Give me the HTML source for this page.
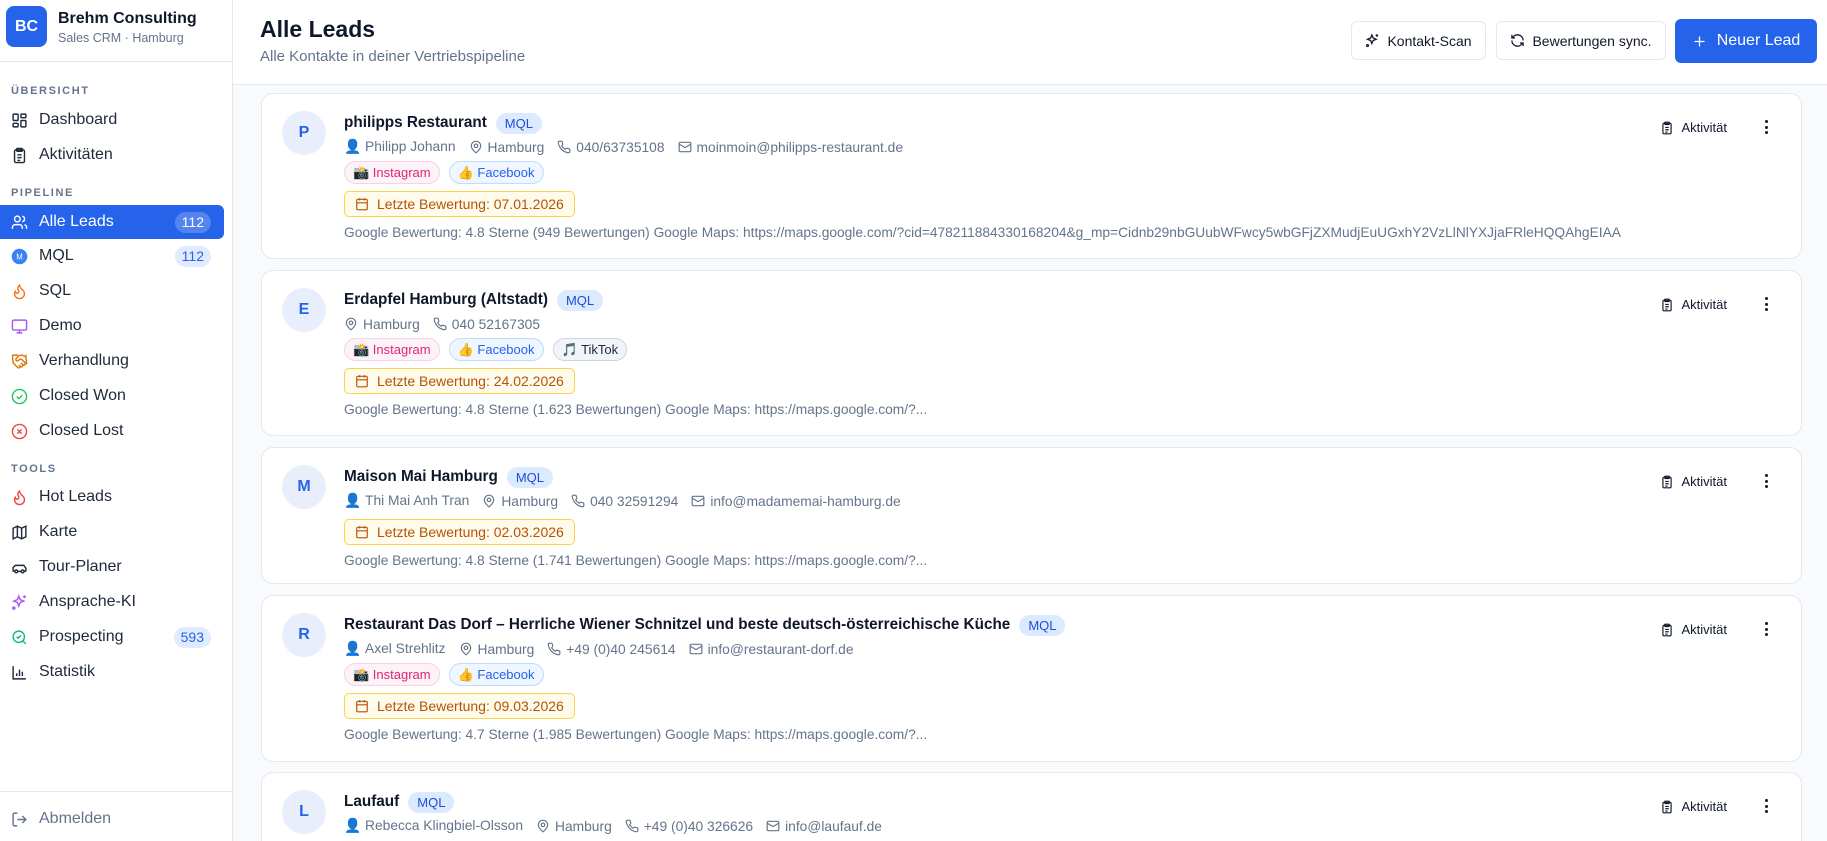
<!DOCTYPE html>
<html><head><meta charset="utf-8">
<style>
*{box-sizing:border-box;margin:0;padding:0}
html,body{width:1827px;height:841px;overflow:hidden}
body{font-family:"Liberation Sans","Noto Sans CJK JP",sans-serif;background:#f8fafc;color:#0f172a;position:relative}
.sb{position:absolute;left:0;top:0;width:233px;height:841px;background:#fff;border-right:1px solid #e2e8f0}
.logo{position:absolute;left:6px;top:6px;width:41px;height:41px;border-radius:8px;background:#2563eb;color:#fff;font-weight:700;font-size:16px;display:flex;align-items:center;justify-content:center}
.bn{position:absolute;left:58px;top:10px;font-weight:700;font-size:16px}
.bs{position:absolute;left:58px;top:31px;font-size:12.5px;color:#64748b}
.div{position:absolute;left:0;width:232px;height:1px;background:#e2e8f0}
.sec{position:absolute;left:11px;font-size:11px;letter-spacing:1.6px;color:#64748b;font-weight:700}
.it{position:absolute;left:0;width:224px;height:34px;display:flex;align-items:center;padding-left:11px;font-size:16px;color:#1e293b}
.it svg{width:17px;height:17px;margin-right:11px;flex:none}
.it.act{background:#2563eb;color:#fff;border-radius:0 6px 6px 0}
.bdg{position:absolute;right:13px;top:7px;height:21px;padding:0 7px;border-radius:11px;background:#e0ebff;color:#2563eb;font-size:14px;line-height:21px}
.act .bdg{background:rgba(255,255,255,.22);color:#fff}
.hd{position:absolute;left:233px;top:0;right:0;height:85px;background:#fff;border-bottom:1px solid #e2e8f0}
.h1{position:absolute;left:27px;top:16px;font-size:23px;font-weight:700}
.h2{position:absolute;left:27px;top:48px;font-size:15px;color:#64748b}
.btn{position:absolute;top:21px;height:39px;border:1px solid #e2e8f0;border-radius:6px;background:#fff;display:flex;align-items:center;justify-content:center;font-size:14px;color:#0f172a;gap:7px}
.btn svg{width:15px;height:15px}
.card{position:absolute;left:261px;width:1541px;background:#fff;border:1px solid #e2e8f0;border-radius:12px;padding:17px 0 0 82px}
.av{position:absolute;left:20px;top:17px;width:44px;height:44px;border-radius:50%;background:#e8eefc;color:#2563eb;font-weight:700;font-size:16px;display:flex;align-items:center;justify-content:center}
.tt{height:24px;display:flex;align-items:center;font-size:15.3px;font-weight:700;color:#0f172a;white-space:nowrap}
.mql{margin-left:9px;height:21px;padding:0 9px;border-radius:11px;background:#dbeafe;color:#1d4ed8;font-size:13px;font-weight:400;line-height:21px}
.mt{height:24px;display:flex;align-items:center;font-size:13.8px;color:#64748b;white-space:nowrap}
.mt span{display:flex;align-items:center;margin-right:13px}
.mt svg{width:14px;height:14px;margin-right:5px}
.so{height:24px;margin-top:2px;display:flex;gap:9px}
.pl{height:23px;padding:0 8px;border-radius:12px;font-size:13px;display:flex;align-items:center;gap:4px}
.ig{background:#fdf2f8;border:1px solid #fbcfe8;color:#db2777}
.fb{background:#eff6ff;border:1px solid #bfdbfe;color:#2563eb}
.tk{background:#f1f5f9;border:1px solid #cbd5e1;color:#1e293b}
.rt{margin-top:6px;height:26px;display:inline-flex;align-items:center;padding:0 10px;border:1px solid #fcd34d;background:#fffbeb;border-radius:5px;color:#b45309;font-size:14px;gap:8px}
.rt svg{width:14px;height:14px}
.gl{margin-top:6px;height:20px;line-height:20px;font-size:13.75px;color:#64748b;white-space:nowrap}
.ak{position:absolute;right:74px;top:26px;display:flex;align-items:center;gap:7px;font-size:13px;color:#0f172a}
.ak svg{width:14px;height:14px}
.dots{position:absolute;right:33px;top:26px;width:4px;height:14px;display:flex;flex-direction:column;justify-content:space-between;align-items:center}
.dots i{width:3px;height:3px;background:#0f172a;border-radius:50%}
</style></head><body>
<div class="sb">
<div class="logo">BC</div><div class="bn">Brehm Consulting</div><div class="bs">Sales CRM · Hamburg</div>
<div class="div" style="top:61px"></div>
<div class="sec" style="top:85px">ÜBERSICHT</div>
<div class="it" style="top:103px"><svg viewBox="0 0 24 24" fill="none" stroke="#1e293b" stroke-width="2"><rect x="3" y="3" width="7" height="9" rx="1"/><rect x="14" y="3" width="7" height="5" rx="1"/><rect x="14" y="12" width="7" height="9" rx="1"/><rect x="3" y="16" width="7" height="5" rx="1"/></svg>Dashboard</div>
<div class="it" style="top:138px"><svg viewBox="0 0 24 24" fill="none" stroke="#1e293b" stroke-width="2"><rect x="5" y="4" width="14" height="18" rx="2"/><rect x="8" y="2" width="8" height="4" rx="1"/><path d="M9 11h6M9 15h6M9 19h4"/></svg>Aktivitäten</div>
<div class="sec" style="top:187px">PIPELINE</div>
<div class="it act" style="top:205px"><svg viewBox="0 0 24 24" fill="none" stroke="#fff" stroke-width="2"><circle cx="9" cy="7" r="4"/><path d="M2 21v-2a4 4 0 0 1 4-4h6a4 4 0 0 1 4 4v2M16 3.1a4 4 0 0 1 0 7.8M22 21v-2a4 4 0 0 0-3-3.9"/></svg>Alle Leads<span class="bdg">112</span></div>
<div class="it" style="top:239px"><svg viewBox="0 0 24 24"><circle cx="12" cy="12" r="11" fill="#3b82f6"/><text x="12" y="16" font-size="11" fill="#fff" text-anchor="middle" font-family="Liberation Sans">M</text></svg>MQL<span class="bdg">112</span></div>
<div class="it" style="top:274px"><svg viewBox="0 0 24 24" fill="none" stroke="#f97316" stroke-width="2"><path d="M8.5 14.5A2.5 2.5 0 0 0 11 12c0-1.4-.5-2-1-3-1.1-2.1-.2-4 2-6 .5 2.5 2 4.9 4 6.5 2 1.6 3 3.5 3 5.5a7 7 0 1 1-14 0c0-1.2.4-2.3 1-3.2.4 1.3 1.2 2.7 2.5 2.7z"/></svg>SQL</div>
<div class="it" style="top:309px"><svg viewBox="0 0 24 24" fill="none" stroke="#a855f7" stroke-width="2"><rect x="2" y="3" width="20" height="14" rx="2"/><path d="M8 21h8M12 17v4"/></svg>Demo</div>
<div class="it" style="top:344px"><svg viewBox="0 0 24 24" fill="none" stroke="#d97706" stroke-width="2"><path d="M11 17l2 2a1 1 0 1 0 3-3M14 14l2.5 2.5a1 1 0 1 0 3-3l-3.9-3.9a3 3 0 0 0-4.2 0l-.9.9a1 1 0 1 1-3-3l2.8-2.8a5.8 5.8 0 0 1 7.1-.9l.5.3a4 4 0 0 0 2.7.6L21 4l1 11h-2M2 3l1 11 6.5 6.5a1 1 0 1 0 3-3M2 3h8"/></svg>Verhandlung</div>
<div class="it" style="top:379px"><svg viewBox="0 0 24 24" fill="none" stroke="#22c55e" stroke-width="2"><circle cx="12" cy="12" r="10"/><path d="M8 12l3 3 5-5"/></svg>Closed Won</div>
<div class="it" style="top:414px"><svg viewBox="0 0 24 24" fill="none" stroke="#ef4444" stroke-width="2"><circle cx="12" cy="12" r="10"/><path d="M15 9l-6 6M9 9l6 6"/></svg>Closed Lost</div>
<div class="sec" style="top:463px">TOOLS</div>
<div class="it" style="top:480px"><svg viewBox="0 0 24 24" fill="none" stroke="#ef4444" stroke-width="2"><path d="M8.5 14.5A2.5 2.5 0 0 0 11 12c0-1.4-.5-2-1-3-1.1-2.1-.2-4 2-6 .5 2.5 2 4.9 4 6.5 2 1.6 3 3.5 3 5.5a7 7 0 1 1-14 0c0-1.2.4-2.3 1-3.2.4 1.3 1.2 2.7 2.5 2.7z"/></svg>Hot Leads</div>
<div class="it" style="top:515px"><svg viewBox="0 0 24 24" fill="none" stroke="#1e293b" stroke-width="2"><path d="M3 6l6-3 6 3 6-3v15l-6 3-6-3-6 3zM9 3v15M15 6v15"/></svg>Karte</div>
<div class="it" style="top:550px"><svg viewBox="0 0 24 24" fill="none" stroke="#1e293b" stroke-width="2"><path d="M19 17h2v-4l-3-4H6L3 12v5h2"/><circle cx="7.5" cy="17.5" r="2"/><circle cx="16.5" cy="17.5" r="2"/><path d="M9.5 17.5h5"/></svg>Tour-Planer</div>
<div class="it" style="top:585px"><svg viewBox="0 0 24 24" fill="none" stroke="#a855f7" stroke-width="2"><path d="M11 3l2 5 5 2-5 2-2 5-2-5-5-2 5-2zM19 2v4M17 4h4"/><circle cx="4" cy="20" r="1.5"/></svg>Ansprache-KI</div>
<div class="it" style="top:620px"><svg viewBox="0 0 24 24" fill="none" stroke="#10b981" stroke-width="2"><circle cx="11" cy="11" r="8"/><path d="M21 21l-4.3-4.3M8 11l2 2 4-4"/></svg>Prospecting<span class="bdg">593</span></div>
<div class="it" style="top:655px"><svg viewBox="0 0 24 24" fill="none" stroke="#1e293b" stroke-width="2"><path d="M3 3v18h18M8 17v-4M12 17V8M16 17v-6"/></svg>Statistik</div>
<div class="div" style="top:791px"></div>
<div class="it" style="top:802px;color:#64748b"><svg viewBox="0 0 24 24" fill="none" stroke="#64748b" stroke-width="2"><path d="M9 21H5a2 2 0 0 1-2-2V5a2 2 0 0 1 2-2h4M16 17l5-5-5-5M21 12H9"/></svg>Abmelden</div>
</div>
<div class="hd">
<div class="h1">Alle Leads</div><div class="h2">Alle Kontakte in deiner Vertriebspipeline</div>
<div class="btn" style="left:1118px;width:135px"><svg viewBox="0 0 24 24" fill="none" stroke="#0f172a" stroke-width="2"><path d="M11 3l2 5 5 2-5 2-2 5-2-5-5-2 5-2zM19 2v4M17 4h4"/><circle cx="4" cy="20" r="1.5"/></svg>Kontakt-Scan</div>
<div class="btn" style="left:1263px;width:170px"><svg viewBox="0 0 24 24" fill="none" stroke="#0f172a" stroke-width="2"><path d="M21 12a9 9 0 0 0-15-6.7L3 8M3 3v5h5M3 12a9 9 0 0 0 15 6.7L21 16M21 21v-5h-5"/></svg>Bewertungen sync.</div>
<div class="btn" style="left:1442px;top:19px;width:142px;height:44px;background:#2563eb;border-color:#2563eb;color:#fff;font-size:16px;gap:10px"><svg viewBox="0 0 24 24" fill="none" stroke="#fff" stroke-width="2"><path d="M12 4v16M4 12h16"/></svg>Neuer Lead</div>
</div>

<div class="card" style="top:93px;height:166px">
<div class="av">P</div>
<div class="tt">philipps Restaurant<span class="mql">MQL</span></div>
<div class="mt"><span>👤&nbsp;Philipp Johann</span><span><svg viewBox="0 0 24 24" fill="none" stroke="#64748b" stroke-width="2"><path d="M20 10c0 6-8 12-8 12s-8-6-8-12a8 8 0 0 1 16 0z"/><circle cx="12" cy="10" r="3"/></svg>Hamburg</span><span><svg viewBox="0 0 24 24" fill="none" stroke="#64748b" stroke-width="2"><path d="M22 16.9v3a2 2 0 0 1-2.2 2 19.8 19.8 0 0 1-8.6-3.1 19.5 19.5 0 0 1-6-6A19.8 19.8 0 0 1 2.1 4.2 2 2 0 0 1 4.1 2h3a2 2 0 0 1 2 1.7c.1 1 .4 1.9.7 2.8a2 2 0 0 1-.5 2.1L8 9.9a16 16 0 0 0 6 6l1.3-1.3a2 2 0 0 1 2.1-.4c.9.3 1.8.6 2.8.7a2 2 0 0 1 1.7 2z"/></svg>040/63735108</span><span><svg viewBox="0 0 24 24" fill="none" stroke="#64748b" stroke-width="2"><rect x="2" y="4" width="20" height="16" rx="2"/><path d="M22 7l-10 6L2 7"/></svg>moinmoin@philipps-restaurant.de</span></div>
<div class="so"><span class="pl ig">📸 Instagram</span><span class="pl fb">👍 Facebook</span></div>
<div class="rt"><svg viewBox="0 0 24 24" fill="none" stroke="#b45309" stroke-width="2"><rect x="3" y="4" width="18" height="18" rx="2"/><path d="M16 2v4M8 2v4M3 10h18"/></svg>Letzte Bewertung: 07.01.2026</div>
<div class="gl">Google Bewertung: 4.8 Sterne (949 Bewertungen) Google Maps: https://maps.google.com/?cid=478211884330168204&amp;g_mp=Cidnb29nbGUubWFwcy5wbGFjZXMudjEuUGxhY2VzLlNlYXJjaFRleHQQAhgEIAA</div>
<div class="ak"><svg viewBox="0 0 24 24" fill="none" stroke="#0f172a" stroke-width="2"><rect x="5" y="4" width="14" height="18" rx="2"/><rect x="8" y="2" width="8" height="4" rx="1"/><path d="M9 11h6M9 15h6M9 19h4"/></svg>Aktivität</div><div class="dots"><i></i><i></i><i></i></div>
</div>

<div class="card" style="top:270px;height:166px">
<div class="av">E</div>
<div class="tt">Erdapfel Hamburg (Altstadt)<span class="mql">MQL</span></div>
<div class="mt"><span><svg viewBox="0 0 24 24" fill="none" stroke="#64748b" stroke-width="2"><path d="M20 10c0 6-8 12-8 12s-8-6-8-12a8 8 0 0 1 16 0z"/><circle cx="12" cy="10" r="3"/></svg>Hamburg</span><span><svg viewBox="0 0 24 24" fill="none" stroke="#64748b" stroke-width="2"><path d="M22 16.9v3a2 2 0 0 1-2.2 2 19.8 19.8 0 0 1-8.6-3.1 19.5 19.5 0 0 1-6-6A19.8 19.8 0 0 1 2.1 4.2 2 2 0 0 1 4.1 2h3a2 2 0 0 1 2 1.7c.1 1 .4 1.9.7 2.8a2 2 0 0 1-.5 2.1L8 9.9a16 16 0 0 0 6 6l1.3-1.3a2 2 0 0 1 2.1-.4c.9.3 1.8.6 2.8.7a2 2 0 0 1 1.7 2z"/></svg>040 52167305</span></div>
<div class="so"><span class="pl ig">📸 Instagram</span><span class="pl fb">👍 Facebook</span><span class="pl tk">🎵 TikTok</span></div>
<div class="rt"><svg viewBox="0 0 24 24" fill="none" stroke="#b45309" stroke-width="2"><rect x="3" y="4" width="18" height="18" rx="2"/><path d="M16 2v4M8 2v4M3 10h18"/></svg>Letzte Bewertung: 24.02.2026</div>
<div class="gl">Google Bewertung: 4.8 Sterne (1.623 Bewertungen) Google Maps: https://maps.google.com/?...</div>
<div class="ak"><svg viewBox="0 0 24 24" fill="none" stroke="#0f172a" stroke-width="2"><rect x="5" y="4" width="14" height="18" rx="2"/><rect x="8" y="2" width="8" height="4" rx="1"/><path d="M9 11h6M9 15h6M9 19h4"/></svg>Aktivität</div><div class="dots"><i></i><i></i><i></i></div>
</div>

<div class="card" style="top:447px;height:137px">
<div class="av">M</div>
<div class="tt">Maison Mai Hamburg<span class="mql">MQL</span></div>
<div class="mt"><span>👤&nbsp;Thi Mai Anh Tran</span><span><svg viewBox="0 0 24 24" fill="none" stroke="#64748b" stroke-width="2"><path d="M20 10c0 6-8 12-8 12s-8-6-8-12a8 8 0 0 1 16 0z"/><circle cx="12" cy="10" r="3"/></svg>Hamburg</span><span><svg viewBox="0 0 24 24" fill="none" stroke="#64748b" stroke-width="2"><path d="M22 16.9v3a2 2 0 0 1-2.2 2 19.8 19.8 0 0 1-8.6-3.1 19.5 19.5 0 0 1-6-6A19.8 19.8 0 0 1 2.1 4.2 2 2 0 0 1 4.1 2h3a2 2 0 0 1 2 1.7c.1 1 .4 1.9.7 2.8a2 2 0 0 1-.5 2.1L8 9.9a16 16 0 0 0 6 6l1.3-1.3a2 2 0 0 1 2.1-.4c.9.3 1.8.6 2.8.7a2 2 0 0 1 1.7 2z"/></svg>040 32591294</span><span><svg viewBox="0 0 24 24" fill="none" stroke="#64748b" stroke-width="2"><rect x="2" y="4" width="20" height="16" rx="2"/><path d="M22 7l-10 6L2 7"/></svg>info@madamemai-hamburg.de</span></div>
<div class="rt"><svg viewBox="0 0 24 24" fill="none" stroke="#b45309" stroke-width="2"><rect x="3" y="4" width="18" height="18" rx="2"/><path d="M16 2v4M8 2v4M3 10h18"/></svg>Letzte Bewertung: 02.03.2026</div>
<div class="gl">Google Bewertung: 4.8 Sterne (1.741 Bewertungen) Google Maps: https://maps.google.com/?...</div>
<div class="ak"><svg viewBox="0 0 24 24" fill="none" stroke="#0f172a" stroke-width="2"><rect x="5" y="4" width="14" height="18" rx="2"/><rect x="8" y="2" width="8" height="4" rx="1"/><path d="M9 11h6M9 15h6M9 19h4"/></svg>Aktivität</div><div class="dots"><i></i><i></i><i></i></div>
</div>

<div class="card" style="top:595px;height:167px">
<div class="av">R</div>
<div class="tt">Restaurant Das Dorf – Herrliche Wiener Schnitzel und beste deutsch-österreichische Küche<span class="mql">MQL</span></div>
<div class="mt"><span>👤&nbsp;Axel Strehlitz</span><span><svg viewBox="0 0 24 24" fill="none" stroke="#64748b" stroke-width="2"><path d="M20 10c0 6-8 12-8 12s-8-6-8-12a8 8 0 0 1 16 0z"/><circle cx="12" cy="10" r="3"/></svg>Hamburg</span><span><svg viewBox="0 0 24 24" fill="none" stroke="#64748b" stroke-width="2"><path d="M22 16.9v3a2 2 0 0 1-2.2 2 19.8 19.8 0 0 1-8.6-3.1 19.5 19.5 0 0 1-6-6A19.8 19.8 0 0 1 2.1 4.2 2 2 0 0 1 4.1 2h3a2 2 0 0 1 2 1.7c.1 1 .4 1.9.7 2.8a2 2 0 0 1-.5 2.1L8 9.9a16 16 0 0 0 6 6l1.3-1.3a2 2 0 0 1 2.1-.4c.9.3 1.8.6 2.8.7a2 2 0 0 1 1.7 2z"/></svg>+49 (0)40 245614</span><span><svg viewBox="0 0 24 24" fill="none" stroke="#64748b" stroke-width="2"><rect x="2" y="4" width="20" height="16" rx="2"/><path d="M22 7l-10 6L2 7"/></svg>info@restaurant-dorf.de</span></div>
<div class="so"><span class="pl ig">📸 Instagram</span><span class="pl fb">👍 Facebook</span></div>
<div class="rt"><svg viewBox="0 0 24 24" fill="none" stroke="#b45309" stroke-width="2"><rect x="3" y="4" width="18" height="18" rx="2"/><path d="M16 2v4M8 2v4M3 10h18"/></svg>Letzte Bewertung: 09.03.2026</div>
<div class="gl">Google Bewertung: 4.7 Sterne (1.985 Bewertungen) Google Maps: https://maps.google.com/?...</div>
<div class="ak"><svg viewBox="0 0 24 24" fill="none" stroke="#0f172a" stroke-width="2"><rect x="5" y="4" width="14" height="18" rx="2"/><rect x="8" y="2" width="8" height="4" rx="1"/><path d="M9 11h6M9 15h6M9 19h4"/></svg>Aktivität</div><div class="dots"><i></i><i></i><i></i></div>
</div>

<div class="card" style="top:772px;height:69px;border-bottom:none;border-radius:12px 12px 0 0">
<div class="av">L</div>
<div class="tt">Laufauf<span class="mql">MQL</span></div>
<div class="mt"><span>👤&nbsp;Rebecca Klingbiel-Olsson</span><span><svg viewBox="0 0 24 24" fill="none" stroke="#64748b" stroke-width="2"><path d="M20 10c0 6-8 12-8 12s-8-6-8-12a8 8 0 0 1 16 0z"/><circle cx="12" cy="10" r="3"/></svg>Hamburg</span><span><svg viewBox="0 0 24 24" fill="none" stroke="#64748b" stroke-width="2"><path d="M22 16.9v3a2 2 0 0 1-2.2 2 19.8 19.8 0 0 1-8.6-3.1 19.5 19.5 0 0 1-6-6A19.8 19.8 0 0 1 2.1 4.2 2 2 0 0 1 4.1 2h3a2 2 0 0 1 2 1.7c.1 1 .4 1.9.7 2.8a2 2 0 0 1-.5 2.1L8 9.9a16 16 0 0 0 6 6l1.3-1.3a2 2 0 0 1 2.1-.4c.9.3 1.8.6 2.8.7a2 2 0 0 1 1.7 2z"/></svg>+49 (0)40 326626</span><span><svg viewBox="0 0 24 24" fill="none" stroke="#64748b" stroke-width="2"><rect x="2" y="4" width="20" height="16" rx="2"/><path d="M22 7l-10 6L2 7"/></svg>info@laufauf.de</span></div>
<div class="ak"><svg viewBox="0 0 24 24" fill="none" stroke="#0f172a" stroke-width="2"><rect x="5" y="4" width="14" height="18" rx="2"/><rect x="8" y="2" width="8" height="4" rx="1"/><path d="M9 11h6M9 15h6M9 19h4"/></svg>Aktivität</div><div class="dots"><i></i><i></i><i></i></div>
</div>
</body></html>
